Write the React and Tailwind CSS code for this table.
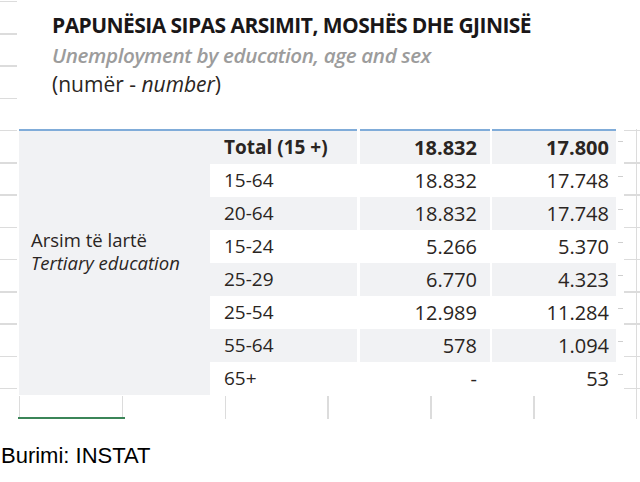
const rows = [
  { age: 'Total (15 +)', a: '18.832', b: '17.800', bold: true, grey: true },
  { age: '15-64', a: '18.832', b: '17.748', grey: false },
  { age: '20-64', a: '18.832', b: '17.748', grey: true },
  { age: '15-24', a: '5.266', b: '5.370', grey: false },
  { age: '25-29', a: '6.770', b: '4.323', grey: true },
  { age: '25-54', a: '12.989', b: '11.284', grey: false },
  { age: '55-64', a: '578', b: '1.094', grey: true },
  { age: '65+', a: '-', b: '53', grey: false },
]

function App() {
  return (
    <div className="relative w-[640px] h-[482px] bg-white overflow-hidden text-[#2a2522]" style={{ fontFamily: '"Open Sans", sans-serif' }}>
      {/* Excel gridlines behind the pasted picture */}
      <div className="absolute left-0 top-[1px] w-[640px] h-[418px] bg-[repeating-linear-gradient(to_bottom,#dcdcdc_0,#dcdcdc_1.5px,transparent_1.5px,transparent_32.25px)]" />
      <div className="absolute left-[19px] top-0 w-[621px] h-[419px] bg-[repeating-linear-gradient(to_right,#dcdcdc_0,#dcdcdc_1.5px,transparent_1.5px,transparent_102.83px)]" />

      <div className="relative flex flex-col">
        {/* Heading */}
        <div className="ml-[17px] h-[129px] bg-white pl-[35px] pt-[12px] flex flex-col">
          <h1 className="text-[21px] leading-[26px] font-bold tracking-[-0.55px] text-[#1a1718]">
            PAPUNËSIA SIPAS ARSIMIT, MOSHËS DHE GJINISË
          </h1>
          <p className="mt-[4px] text-[20.6px] leading-[26px] font-semibold italic tracking-[-0.37px] text-[#9c9c9c]">
            Unemployment by education, age and sex
          </p>
          <p className="mt-[3px] text-[21px] leading-[26px]">
            (numër - <span className="italic">number</span>)
          </p>
        </div>

        {/* Table */}
        <div className="ml-[17px] w-[607px] h-[267px] bg-white pl-[2px] flex">
          <div className="w-[191px] h-[266px] border-t-2 border-[#80acd9] bg-[#f1f2f4] pl-[12px] pt-[97px] text-[18.5px] leading-[23px]">
            <div>Arsim të lartë</div>
            <div className="italic">Tertiary education</div>
          </div>
          <div className="flex flex-col">
            {rows.map((r, i) => (
              <div key={i} className={`flex ${i === 0 ? 'h-[35px]' : 'h-[33px]'} ${r.bold ? 'font-bold' : ''}`}>
                <div className={`w-[147px] pl-[14px] flex items-center text-[19px] ${r.grey ? 'bg-[#f1f2f4]' : 'bg-white'} ${i === 0 ? 'border-t-2 border-[#80acd9]' : ''}`}>
                  {r.age}
                </div>
                <div className={`ml-[3px] w-[130px] pr-[13px] flex items-center justify-end text-[20px] ${r.grey ? 'bg-[#f1f2f4]' : 'bg-white'} ${i === 0 ? 'border-t-2 border-[#80acd9]' : ''}`}>
                  {r.a}
                </div>
                <div className={`ml-[2px] w-[124px] pr-[7px] flex items-center justify-end text-[20px] ${r.grey ? 'bg-[#f1f2f4]' : 'bg-white'} ${i === 0 ? 'border-t-2 border-[#80acd9]' : ''}`}>
                  {r.b}
                </div>
                <div className="w-[8px] pl-[2px] pt-[12px]">
                  <div className="w-[5px] h-px bg-[#cfcfcf]" />
                </div>
              </div>
            ))}
          </div>
        </div>

        {/* active cell marker */}
        <div className="ml-[18px] mt-[21px] w-[107px] h-[2px] bg-[#3b8558]" />

        <p className="ml-[1px] mt-[24px] text-[22px] leading-[26px] text-black" style={{ fontFamily: '"Liberation Sans", sans-serif' }}>
          Burimi: INSTAT
        </p>
      </div>
    </div>
  )
}

export default App
